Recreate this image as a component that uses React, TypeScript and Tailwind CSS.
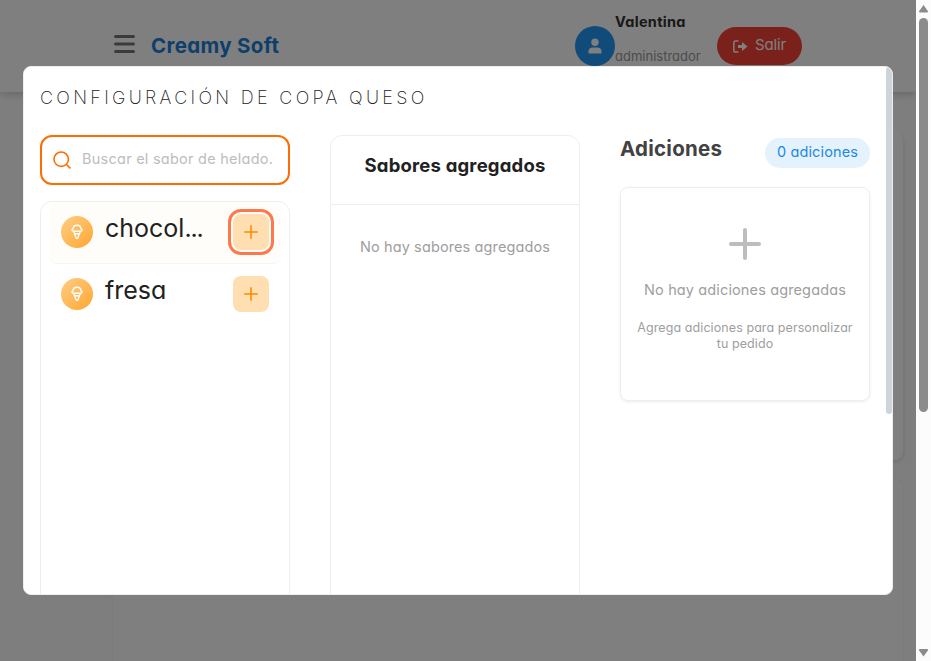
import type { ReactNode } from "react";

function ConeIcon() {
  return (
    <svg width="18" height="18" viewBox="0 0 18 18" fill="none" stroke="white" strokeWidth="1.35" strokeLinejoin="round" strokeLinecap="round">
      <path d="M5 8.2C3.6 7.8 3.6 6.2 5 5.9C5.1 3.6 6.7 2.2 9 2.2S12.9 3.6 13 5.9C14.4 6.2 14.4 7.8 13 8.2Z" />
      <path d="M5.6 8.4 8.4 15.4H9.6L12.4 8.4M6.5 10.7h5" />
    </svg>
  );
}

function PlusIcon({ size, width }: { size: number; width: number }) {
  return (
    <svg width={size} height={size} viewBox={`0 0 ${size} ${size}`} fill="none" stroke="currentColor" strokeWidth={width} strokeLinecap="round">
      <path d={`M${width / 2} ${size / 2}H${size - width / 2}M${size / 2} ${width / 2}V${size - width / 2}`} />
    </svg>
  );
}

function FlavorRow({ name, active }: { name: ReactNode; active?: boolean }) {
  return (
    <div className={`flex h-[62px] items-center rounded-lg border-b pl-3 pr-3 pb-[2px] ${active ? "border-[#f5f5f5] bg-[#fffdf9]" : "border-transparent"}`}>
      <span className="flex h-8 w-8 shrink-0 items-center justify-center rounded-full bg-linear-to-br from-[#ffcc80] to-[#ffa726]">
        <ConeIcon />
      </span>
      <span className="ml-3 flex-1 pb-[7px] text-[25px] leading-8 text-[#212121]">{name}</span>
      <button className={`flex h-9 w-9 items-center justify-center rounded-lg bg-[#ffdfb2] text-[#fb8c00] ${active ? "outline-3 outline-offset-2 outline-[#ff7849]" : ""}`}>
        <PlusIcon size={14} width={1.6} />
      </button>
    </div>
  );
}

function Page() {
  return (
    <div className="isolate h-[661px] overflow-hidden bg-[#fdfdfd]">
      <header className="relative z-10 flex h-[92px] items-center bg-white pl-[113px] shadow-[0_2px_8px_rgba(0,0,0,0.2)]">
        <svg className="mt-[-4px]" width="22" height="18" viewBox="0 0 22 18" stroke="#767676" strokeWidth="3" strokeLinecap="round">
          <path d="M2.5 1.5H20.5M2.5 9H20.5M2.5 16.5H20.5" />
        </svg>
        <h1 className="ml-4 w-[129px] whitespace-nowrap text-[20.5px] font-bold leading-6 tracking-[0.34px] text-[#1c7ed6]">Creamy Soft</h1>
        <div className="ml-[295px] flex h-10 w-10 items-center justify-center rounded-full bg-[#2196f3]">
          <svg width="14" height="16" viewBox="0 0 14 16" fill="#fff">
            <circle cx="7" cy="4.3" r="3.7" />
            <path d="M0.5 15.5V13.5Q0.5 9.5 5 9.5H9Q13.5 9.5 13.5 13.5V15.5Z" />
          </svg>
        </div>
        <div className="flex w-[102px] flex-col gap-[14px] pb-[14px]">
          <strong className="text-[14.5px] font-bold leading-5 tracking-[0.3px] text-[#303030]">Valentina</strong>
          <span className="text-[13px] leading-5 text-[#999]">administrador</span>
        </div>
        <button className="flex h-[38px] w-[85px] items-center rounded-full bg-[#f44336] pl-4 text-white">
          <svg width="15" height="13" viewBox="0 0 15 13" fill="none" stroke="white" strokeWidth="1.5">
            <path d="M5.5 1H2.6Q.8 1 .8 2.8V10.2Q.8 12 2.6 12H5.5" />
            <path d="M5 5H9V2L14.5 6.5 9 11V8H5Z" fill="white" stroke="none" />
          </svg>
          <span className="ml-[7px] pb-[2px] text-[15px] leading-5 tracking-[-0.15px]">Salir</span>
        </button>
      </header>
      <main className="mr-[13px] h-[569px] pl-1 pt-10">
        <div className="-ml-5 h-[328px] rounded-lg bg-[#fefefe] shadow-[1px_2px_4px_rgba(0,0,0,0.1)] [clip-path:inset(0_-8px_-8px_400px)]" />
        <div className="mt-5 flex h-[260px]">
          <div className="w-[109px] bg-[#fcfcfc]" />
          <div className="flex-1 rounded-lg bg-[#fefefe] shadow-[0_0_3px_rgba(0,0,0,0.05)]" />
        </div>
      </main>
    </div>
  );
}

function ConfigDialog() {
  return (
    <section className="flex h-[529px] w-[870px] justify-between overflow-hidden rounded-lg border border-[#eee] bg-white">
      <div className="w-[830px] pl-4">
        <h2 className="mt-[20px] h-5 whitespace-nowrap text-[18px] font-[250] leading-[21px] tracking-[3.3px] text-[#212121]">CONFIGURACIÓN DE COPA QUESO</h2>
        <div className="mt-7 flex w-[830px] gap-10">
          <div className="w-[250px]">
            <div className="flex h-[50px] items-center rounded-xl border-2 border-[#ff6d00] pl-[11px]">
              <svg className="mt-[-2px]" width="19" height="19" viewBox="0 0 19 19" fill="none" stroke="#ff6d00" strokeWidth="1.6" strokeLinecap="round">
                <circle cx="8.2" cy="9.2" r="7.2" />
                <path d="m13.5 14.5 3.4 3.4" />
              </svg>
              <span className="ml-[10px] whitespace-nowrap pb-[2px] text-[14.5px] leading-5 tracking-[0.25px] text-[#bdbdbd]">Buscar el sabor de helado.</span>
            </div>
            <div className="mt-4 h-[420px] rounded-xl border border-[#eee] px-2">
              <FlavorRow name={<>chocol<span className="tracking-[-1.2px]">...</span></>} active />
              <FlavorRow name="fresa" />
            </div>
          </div>
          <div className="h-[480px] w-[250px] rounded-xl border border-[#eee] text-center">
            <h3 className="h-[69px] border-b border-[#eee] pt-[17px] text-[18.5px] font-bold leading-6 tracking-[0.19px] text-[#212121]">Sabores agregados</h3>
            <p className="pt-8 text-[14.5px] leading-5 tracking-[0.12px] text-[#9e9e9e]">No hay sabores agregados</p>
          </div>
          <div className="w-[250px]">
            <div className="flex h-[52px] justify-between">
              <h3 className="pt-[2px] text-[20.5px] font-bold leading-6 tracking-[0.25px] text-[#424242]">Adiciones</h3>
              <span className="mt-[3px] flex h-[30px] w-[105px] items-center justify-center rounded-full bg-[#e3f2fd] pb-[3px] text-[14.5px] tracking-[0.13px] text-[#1e88e5]">0 adiciones</span>
            </div>
            <div className="flex h-[214px] flex-col items-center rounded-lg border border-[#eee] text-center shadow-[0_1px_3px_rgba(0,0,0,0.08)]">
              <span className="mt-10 text-[#bdbdbd]"><PlusIcon size={32} width={4} /></span>
              <p className="mt-5 text-[14.5px] leading-5 tracking-[0.13px] text-[#9e9e9e]">No hay adiciones agregadas</p>
              <p className="mt-5 whitespace-nowrap text-[12.5px] leading-4 tracking-[0.08px] text-[#9e9e9e]">Agrega adiciones para personalizar<br />tu pedido</p>
            </div>
          </div>
        </div>
      </div>
      <div className="h-[347px] w-[6px] rounded-full bg-[#ced4dc]" />
    </section>
  );
}

export default function App() {
  return (
    <div className="relative flex h-[661px] w-[931px] overflow-hidden bg-white font-['Inter',sans-serif] [font-feature-settings:'cv11']">
      <div className="w-[916px]"><Page /></div>
      <div className="flex w-[15px] flex-col items-center bg-[#fcfcfc]">
        <svg className="mt-[5px]" width="9" height="8" viewBox="0 0 9 8" fill="#8b8b8b"><path d="M4.5 0 9 6.3Q9 7.5 8 7.5H1Q0 7.5 0 6.3Z" /></svg>
        <div className="mt-[5px] h-[394px] w-[9px] rounded-full bg-[#8b8b8b]" />
        <svg className="mb-[4px] mt-auto" width="9" height="8" viewBox="0 0 9 8" fill="#8b8b8b"><path d="M4.5 7.5 9 1.2Q9 0 8 0H1Q0 0 0 1.2Z" /></svg>
      </div>
      <div className="absolute inset-y-0 left-0 flex w-[916px] items-center justify-center bg-black/50">
        <ConfigDialog />
      </div>
    </div>
  );
}
